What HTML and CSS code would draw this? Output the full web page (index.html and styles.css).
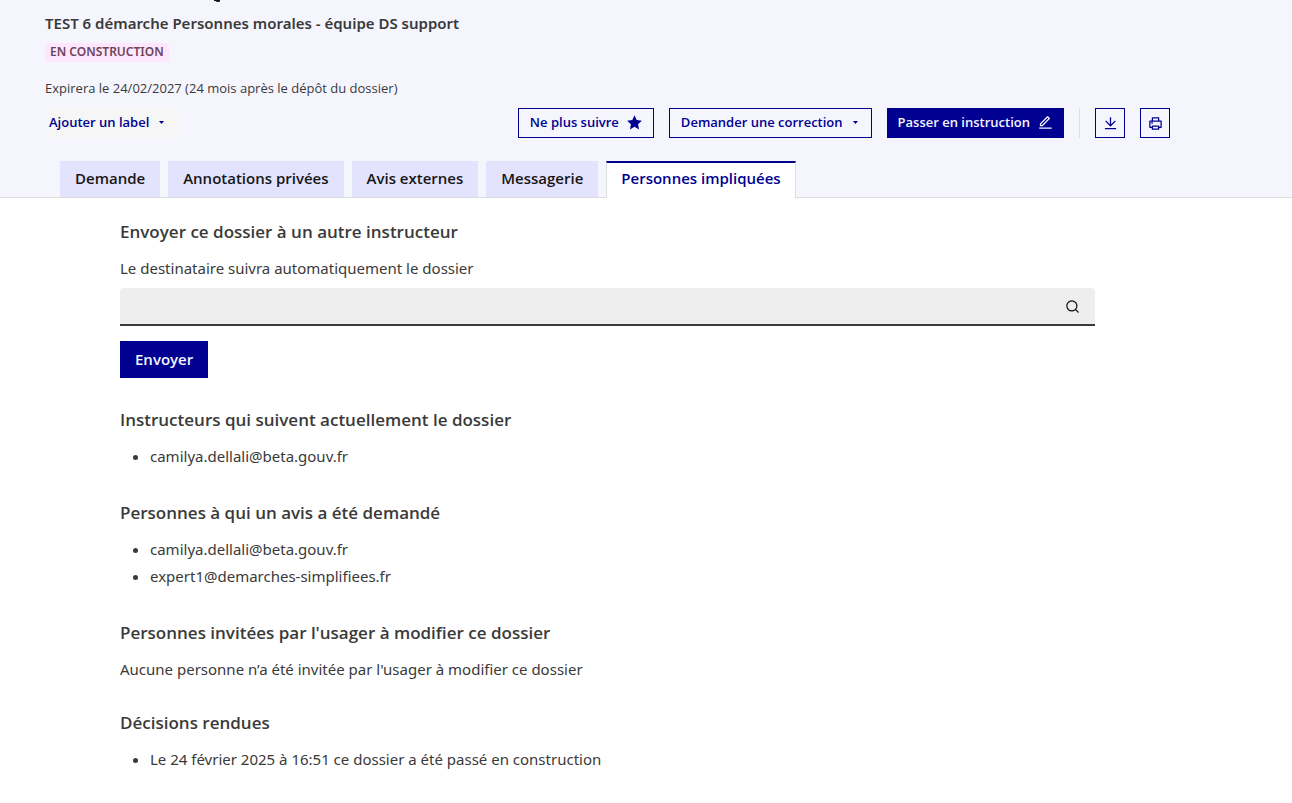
FILE: index.html
```html
<!DOCTYPE html>
<html lang="fr">
<head>
<meta charset="utf-8">
<title>Personnes impliquées</title>
<link rel="stylesheet" href="styles.css">
</head>
<body>
<header class="header">
  <svg class="descender" viewBox="0 0 9 3" aria-hidden="true"><path d="M2 0H8V1.200L7 2H5L3.500 1H2Z"/></svg>
  <div class="intro">
    <h1 class="procedure">TEST 6 démarche Personnes morales - équipe DS support</h1>
    <span class="badge">En construction</span>
    <p class="expiry">Expirera le 24/02/2027 (24 mois après le dépôt du dossier)</p>
  </div>
  <div class="toolbar">
    <button class="btn btn-label" type="button">Ajouter un label <svg class="caret" viewBox="0 0 9 9"><path d="M2 3h5L4.500 6z"/></svg></button>
    <div class="actions">
      <button class="btn btn-outline" type="button">Ne plus suivre
        <svg class="icon" viewBox="0 0 24 24"><path d="m12 .5 3.500 7.600 8.300 1-6.100 5.700 1.600 8.200L12 18.900 4.700 23l1.600-8.200L.2 9.100l8.300-1z"/></svg>
      </button>
      <button class="btn btn-outline" type="button">Demander une correction <svg class="caret" viewBox="0 0 9 9"><path d="M2 3h5L4.500 6z"/></svg></button>
      <button class="btn btn-primary" type="button">Passer en instruction
        <svg class="icon" viewBox="0 0 24 24"><path d="m6.410 16 10.300-10.300-1.410-1.410L5 14.590V16h1.410Zm.83 2H3v-4.240L14.600 2.160a1 1 0 0 1 1.410 0l2.830 2.830a1 1 0 0 1 0 1.410L7.240 18ZM2 20h20v2H2v-2Z"/></svg>
      </button>
      <span class="divider"></span>
      <button class="btn btn-outline btn-square" type="button" aria-label="Télécharger">
        <svg class="icon" viewBox="0 0 24 24"><path d="M3 19h18v2H3v-2Zm10-5.830 6.070-6.070 1.420 1.410L12 17 3.510 8.520l1.420-1.420L11 13.170V2h2v11.170Z"/></svg>
      </button>
      <button class="btn btn-outline btn-square" type="button" aria-label="Imprimer">
        <svg class="icon" viewBox="0 0 24 24"><path d="M6 19H3a1 1 0 0 1-1-1V8a1 1 0 0 1 1-1h3V3a1 1 0 0 1 1-1h10a1 1 0 0 1 1 1v4h3a1 1 0 0 1 1 1v10a1 1 0 0 1-1 1h-3v2a1 1 0 0 1-1 1H7a1 1 0 0 1-1-1v-2Zm0-2v-1a1 1 0 0 1 1-1h10a1 1 0 0 1 1 1v1h2V9H4v8h2ZM8 4v3h8V4H8Zm0 13v3h8v-3H8Zm-3-7h3v2H5v-2Z"/></svg>
      </button>
    </div>
  </div>
  <nav class="tabs" aria-label="Dossier">
    <a class="tab" href="#demande">Demande</a>
    <a class="tab" href="#annotations">Annotations privées</a>
    <a class="tab" href="#avis">Avis externes</a>
    <a class="tab" href="#messagerie">Messagerie</a>
    <a class="tab tab-active" href="#personnes" aria-current="page">Personnes impliquées</a>
  </nav>
</header>
<main class="content" id="personnes">
  <form class="block">
    <h2 class="title">Envoyer ce dossier à un autre instructeur</h2>
    <label class="text" for="recipient">Le destinataire suivra automatiquement le dossier</label>
    <div class="field">
      <input class="input" id="recipient" type="text">
      <svg class="icon search" viewBox="0 0 24 24"><path d="m18.030 16.620 4.280 4.280-1.410 1.410-4.280-4.280A9 9 0 1 1 18.030 16.620Zm-2.010-.74A7 7 0 1 0 15.880 16.020Z"/></svg>
    </div>
    <button class="btn-send" type="button">Envoyer</button>
  </form>
  <section class="block">
    <h2 class="title">Instructeurs qui suivent actuellement le dossier</h2>
    <ul class="list"><li>camilya.dellali@beta.gouv.fr</li></ul>
  </section>
  <section class="block">
    <h2 class="title">Personnes à qui un avis a été demandé</h2>
    <ul class="list"><li>camilya.dellali@beta.gouv.fr</li><li>expert1@demarches-simplifiees.fr</li></ul>
  </section>
  <section class="block">
    <h2 class="title">Personnes invitées par l'usager à modifier ce dossier</h2>
    <p class="text">Aucune personne n’a été invitée par l'usager à modifier ce dossier</p>
  </section>
  <section class="block">
    <h2 class="title">Décisions rendues</h2>
    <ul class="list"><li>Le 24 février 2025 à 16:51 ce dossier a été passé en construction</li></ul>
  </section>
</main>
</body>
</html>
```
FILE: styles.css
```css
* { box-sizing: border-box; }
body {
  margin: 0;
  background: #fff;
  color: #3a3a3a;
  font: 15px/24px "Noto Sans", "Open Sans", sans-serif;
}
h1, h2, p, ul { margin: 0; }
button { cursor: pointer; }
.btn, .btn-send, .tab, .title, .expiry { font-family: "Open Sans", "Noto Sans", sans-serif; }
.header {
  position: relative;
  padding: 11px 122px 0 45px;
  background: #f5f5fe;
  border-bottom: 1px solid #ddd;
}
.descender { position: absolute; left: 212px; top: 0; width: 9px; height: 3px; fill: #161616; }
.intro { display: flex; flex-direction: column; align-items: flex-start; }
.procedure { font-size: 15px; font-weight: 600; line-height: 24px; }
.badge {
  margin-top: 8px;
  padding: 0 5px 1px;
  border-radius: 3px;
  background: #fee7fc;
  color: #6e445a;
  font-size: 12px;
  font-weight: 600;
  line-height: 18px;
  text-transform: uppercase;
}
.expiry { margin-top: 14px; font-size: 13px; line-height: 24px; }
.toolbar { display: flex; justify-content: space-between; margin-top: 8px; }
.actions { display: flex; gap: 15px; }
.btn {
  display: flex;
  align-items: center;
  gap: 8px;
  height: 30px;
  padding: 0 11px 2px;
  border: 0;
  background: none;
  color: #000091;
  font-size: 13px;
  font-weight: 600;
  white-space: nowrap;
}
.btn-label { padding: 0 14px 2px 4px; background: #f6f6f6; }
.btn-outline { border: 1px solid #000091; }
.btn-primary { background: #000091; color: #f5f5fe; }
.btn-square { width: 30px; justify-content: center; padding: 0; }
.icon { flex: none; width: 15px; height: 15px; fill: currentColor; }
.caret { flex: none; width: 9px; height: 9px; fill: currentColor; }
.divider { width: 1px; background: #ddd; }
.tabs { display: flex; gap: 8px; margin: 23px 0 -1px; padding-left: 15px; }
.tab {
  height: 36px;
  margin-bottom: 1px;
  padding: 0 15px;
  background: #e3e3fd;
  color: #161616;
  font-weight: 600;
  line-height: 34px;
  text-decoration: none;
  white-space: nowrap;
}
.tab-active {
  height: 37px;
  margin-bottom: 0;
  padding: 0 14px;
  border: solid #ddd;
  border-width: 2px 1px 0;
  border-top-color: #000091;
  background: #fff;
  color: #000091;
  line-height: 30px;
}
.content {
  display: flex;
  flex-direction: column;
  gap: 30px;
  padding: 22px 197px 30px 120px;
}
.title { margin-bottom: 12px; font-size: 17px; font-weight: 600; line-height: 24px; }
.text { display: block; }
.field { position: relative; display: flex; margin: 8px 0 15px; }
.input {
  width: 100%;
  height: 38px;
  padding: 0 45px 0 15px;
  border: 0;
  border-bottom: 2px solid #3a3a3a;
  border-radius: 4px 4px 0 0;
  background: #eee;
  font: inherit;
}
.search { position: absolute; right: 15px; top: 11px; color: #161616; }
.btn-send {
  height: 37px;
  padding: 0 15px 2px;
  border: 0;
  background: #000091;
  color: #f5f5fe;
  font-size: 15px;
  font-weight: 600;
}
.list { display: grid; gap: 3px; margin-bottom: 3px; padding-left: 30px; }
```
